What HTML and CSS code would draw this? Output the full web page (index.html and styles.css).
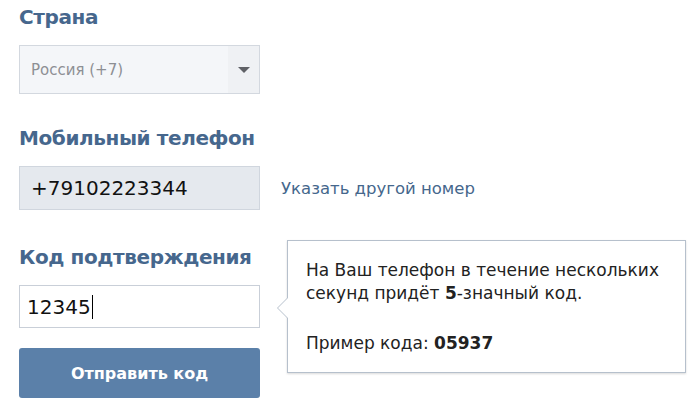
FILE: index.html
```html
<!DOCTYPE html>
<html lang="ru">
<head>
    <meta charset="UTF-8">
    <title>Подтверждение телефона</title>
    <link rel="stylesheet" href="styles.css">
</head>
<body>
    <div class="form">
        <div class="label">Страна</div>
        <div class="select">
            <span class="select-text">Россия (+7)</span>
            <span class="select-arrow"></span>
        </div>

        <div class="label">Мобильный телефон</div>
        <div class="row">
            <div class="input input-phone">+79102223344</div>
            <a class="link" href="#">Указать другой номер</a>
        </div>

        <div class="row row-code">
            <div class="col">
                <div class="label">Код подтверждения</div>
                <div class="input input-code">12345<span class="caret"></span></div>
                <button class="button">Отправить код</button>
            </div>
            <div class="tip">
                <p>На Ваш телефон в течение нескольких<br>секунд придёт <b>5</b>-значный код.</p>
                <p>Пример кода: <b>05937</b></p>
            </div>
        </div>
    </div>
</body>
</html>
```

FILE: styles.css
```css
body {
    margin: 0;
    background: #fff;
    font-family: "DejaVu Sans", Tahoma, sans-serif;
}
.form {
    padding: 0 0 0 19px;
}
.label {
    font-family: "DejaVu Sans", Tahoma, sans-serif;
    font-weight: bold;
    font-size: 20px;
    color: #46678d;
    height: 45px;
    line-height: 34px;
    letter-spacing: -0.4px;
}
.select {
    width: 239px;
    height: 47px;
    border: 1px solid #d3d8df;
    background: #f4f6f9;
    display: flex;
    align-items: center;
    box-sizing: content-box;
}
.select-text {
    flex: 1;
    padding-left: 11px;
    font-size: 15px;
    color: #8d8f94;
}
.select-arrow {
    width: 31px;
    height: 47px;
    background: #eff1f4;
    position: relative;
}
.select-arrow::after {
    content: "";
    position: absolute;
    left: 10px;
    top: 21px;
    border-left: 6px solid transparent;
    border-right: 6px solid transparent;
    border-top: 6px solid #5f6166;
}
.select + .label {
    margin-top: 27px;
}
.row {
    display: flex;
    align-items: center;
}
.input {
    width: 228px;
    height: 42px;
    border: 1px solid #c9cfd8;
    padding-left: 11px;
    display: flex;
    align-items: center;
    font-size: 20px;
    color: #111;
}
.input-phone {
    background: #e5e9ee;
    border-color: #d0d6de;
}
.link {
    margin-left: 21px;
    font-size: 16.5px;
    color: #45678c;
    text-decoration: none;
}
.row-code {
    align-items: flex-start;
    margin-top: 30px;
}
.input-code {
    background: #fff;
    height: 41px;
    width: 232px;
    padding-left: 7px;
}
.caret {
    display: inline-block;
    width: 1px;
    height: 24px;
    background: #000;
    margin-left: 1px;
}
.button {
    display: block;
    margin-top: 20px;
    width: 241px;
    height: 50px;
    border: none;
    border-radius: 3px;
    background: #5b80a9;
    color: #fff;
    font-family: "DejaVu Sans", Tahoma, sans-serif;
    font-weight: bold;
    font-size: 16px;
}
.tip {
    position: relative;
    box-sizing: border-box;
    margin-left: 27px;
    width: 399px;
    height: 133px;
    padding: 18px 0 0 18px;
    border: 1px solid #b6c0cc;
    box-shadow: 0 1px 2px rgba(0, 0, 0, 0.15);
    font-size: 17px;
    color: #222;
    line-height: 23px;
}
.tip p {
    margin: 0;
}
.tip p + p {
    margin-top: 27px;
}
.tip::before {
    content: "";
    position: absolute;
    left: -11px;
    top: 56px;
    border-top: 11px solid transparent;
    border-bottom: 11px solid transparent;
    border-right: 11px solid #b6c0cc;
}
.tip::after {
    content: "";
    position: absolute;
    left: -10px;
    top: 57px;
    border-top: 10px solid transparent;
    border-bottom: 10px solid transparent;
    border-right: 10px solid #fff;
}
```
